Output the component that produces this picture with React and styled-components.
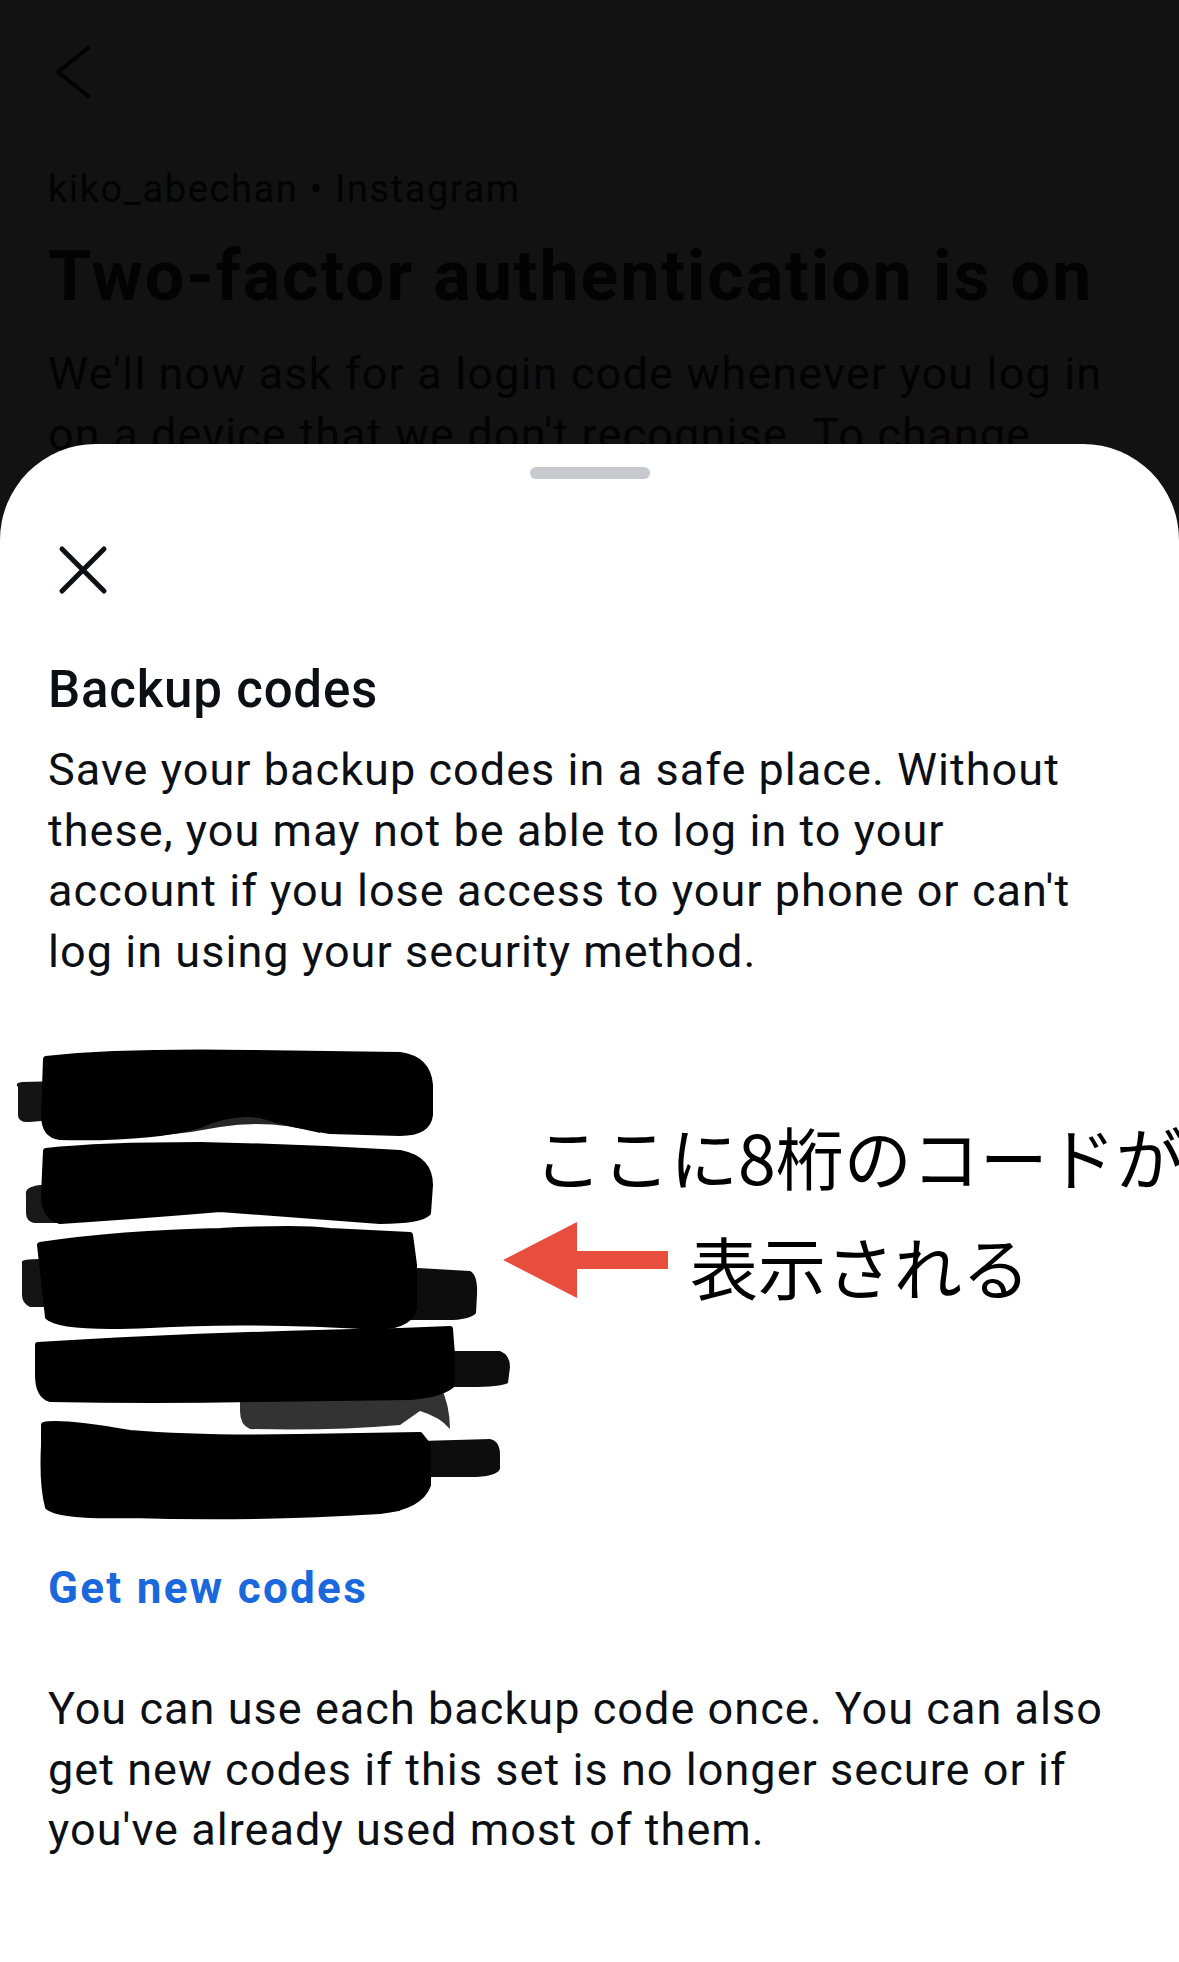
import React from "react";
import styled, { createGlobalStyle } from "styled-components";

const Global = createGlobalStyle`
  html, body { margin: 0; padding: 0; background: #121212; }
  body { font-family: Roboto, "Noto Sans", "Liberation Sans", sans-serif; }
  * { box-sizing: border-box; }
`;

const Screen = styled.div`
  position: relative;
  width: 1179px;
  height: 1962px;
  overflow: hidden;
  background: #121212;
`;

const BehindPage = styled.div`
  display: flex;
  flex-direction: column;
  padding: 44px 48px 0 48px;
  color: #030303;
`;

const BackButton = styled.svg`
  display: block;
  margin-left: 4px;
`;

const Account = styled.div`
  margin-top: 64px;
  font-size: 38px;
  line-height: 46px;
  font-weight: 400;
  letter-spacing: 1.6px;
  white-space: nowrap;
`;

const PageTitle = styled.h1`
  margin: 22px 0 0 0;
  font-size: 70px;
  line-height: 84px;
  font-weight: 700;
  letter-spacing: 1.9px;
  white-space: nowrap;
`;

const PageText = styled.p`
  margin: 26px 0 0 0;
  font-size: 45px;
  line-height: 60.5px;
  letter-spacing: 1.15px;
  white-space: nowrap;
`;

const Sheet = styled.section`
  position: absolute;
  top: 444px;
  left: 0;
  right: 0;
  bottom: 0;
  background: #ffffff;
  border-radius: 96px 96px 0 0;
  display: flex;
  flex-direction: column;
  padding: 0 48px;
  color: #0c1014;
`;

const Handle = styled.div`
  align-self: center;
  width: 120px;
  height: 12px;
  margin-top: 23px;
  border-radius: 6px;
  background: #c7c9cf;
`;

const CloseButton = styled.button`
  margin: 66px 0 0 10px;
  padding: 0;
  width: 50px;
  height: 50px;
  border: 0;
  background: transparent;
  display: block;
`;

const Heading = styled.h2`
  margin: 64px 0 0 0;
  font-size: 51px;
  line-height: 62px;
  font-weight: 500;
  letter-spacing: 0.8px;
  white-space: nowrap;
`;

const Body = styled.p`
  margin: ${(p) => p.$top}px 0 0 0;
  font-size: 45px;
  line-height: 60.5px;
  font-weight: 400;
  letter-spacing: 1.05px;
  white-space: nowrap;
`;

const CodesRow = styled.div`
  margin: 63px -48px 0 -48px;
  height: 480px;
  display: grid;
  grid-template-columns: 503px 1fr;
  align-items: start;
`;

const Redacted = styled.svg`
  display: block;
  overflow: visible;
`;

const Annotation = styled.div`
  margin-top: 56px;
  display: flex;
  flex-direction: column;
  font-family: "Noto Sans CJK JP", "Noto Sans CJK SC", sans-serif;
  font-size: 68px;
  line-height: 110px;
  font-weight: 400;
  color: #000;
  white-space: nowrap;
`;

const NoteLine = styled.div`
  padding-left: ${(p) => p.$indent || 0}px;
  display: flex;
  align-items: center;
  gap: 21px;
`;

const Arrow = styled.svg`
  flex: none;
  display: block;
  margin-bottom: 12px;
`;

const LinkButton = styled.button`
  margin: 36px 0 0 0;
  padding: 0;
  border: 0;
  background: transparent;
  align-self: flex-start;
  font-family: inherit;
  font-size: 44px;
  line-height: 54px;
  font-weight: 700;
  letter-spacing: 2.3px;
  color: #1a68dc;
  white-space: nowrap;
`;

const blobs = [
  { d: "M18 42 Q14 38 22 37 L62 36 L62 74 L30 77 Q18 78 18 70 Z", o: 0.92 },
  { d: "M46 14 Q120 6 250 8 L400 10 Q428 14 430 40 L430 70 Q428 88 400 88 L330 86 Q290 80 260 70 Q230 66 200 80 Q150 94 60 92 Q44 90 44 70 Z", o: 1 },
  { d: "M70 84 Q150 90 220 74 Q270 64 320 80 L320 88 Q270 74 220 82 Q150 96 70 92 Z", o: 0.85 },
  { d: "M26 150 Q24 142 40 140 L62 140 L62 178 L34 178 Q26 176 26 168 Z", o: 0.9 },
  { d: "M46 106 Q100 100 200 100 Q300 102 400 108 Q430 114 430 140 L428 168 Q420 176 380 176 Q300 170 220 164 Q150 170 60 176 Q44 172 44 150 Z", o: 1 },
  { d: "M22 218 Q20 214 40 214 L62 214 L62 262 L30 262 Q22 258 22 250 Z", o: 0.92 },
  { d: "M40 200 Q120 188 220 186 Q300 182 330 186 L410 190 L414 220 L414 262 Q412 280 380 282 Q250 274 150 280 Q60 284 48 272 Z", o: 1 },
  { d: "M330 188 L410 190 L412 226 Q380 210 330 214 Z", o: 0.75 },
  { d: "M400 222 L470 226 Q478 230 477 250 L476 268 Q470 276 440 275 L400 275 Z", o: 0.95 },
  { d: "M240 340 L440 340 Q450 360 450 384 Q440 372 420 366 L400 380 Q330 386 250 384 Q240 380 240 366 Z", o: 0.8 },
  { d: "M38 300 Q200 290 400 286 L450 284 L452 310 L452 340 Q440 350 410 352 L260 354 Q150 356 50 354 Q38 350 38 330 Z", o: 1 },
  { d: "M440 306 L500 306 Q510 310 510 322 L508 338 Q500 342 470 342 L440 342 Z", o: 0.95 },
  { d: "M44 380 Q60 376 130 388 Q200 394 300 392 L420 390 L428 400 L428 440 Q420 462 380 466 Q250 474 130 470 Q60 472 48 462 Q42 440 44 400 Z", o: 1 },
  { d: "M50 440 Q150 452 250 448 Q330 444 400 452 L400 466 Q250 476 120 472 Q60 472 50 462 Z", o: 0.7 },
  { d: "M420 396 L490 394 Q500 396 500 410 L500 424 Q496 432 470 432 L420 432 Z", o: 0.95 },
];

export default function App() {
  return (
    <Screen>
      <Global />
      <BehindPage>
        <BackButton width="40" height="58" viewBox="0 0 40 58">
          <polyline points="36,4 6,28 36,52" fill="none" stroke="#030303" strokeWidth="4" strokeLinecap="round" strokeLinejoin="round" />
        </BackButton>
        <Account>kiko_abechan • Instagram</Account>
        <PageTitle>Two-factor authentication is on</PageTitle>
        <PageText>
          We'll now ask for a login code whenever you log in
          <br />
          on a device that we don't recognise. To change
        </PageText>
      </BehindPage>

      <Sheet>
        <Handle />
        <CloseButton aria-label="Close">
          <svg width="50" height="50" viewBox="0 0 50 50">
            <path d="M4 4 L46 46 M46 4 L4 46" stroke="#0c1014" strokeWidth="5" strokeLinecap="round" />
          </svg>
        </CloseButton>
        <Heading>Backup codes</Heading>
        <Body $top={19}>
          Save your backup codes in a safe place. Without
          <br />
          these, you may not be able to log in to your
          <br />
          account if you lose access to your phone or can't
          <br />
          log in using your security method.
        </Body>

        <CodesRow>
          <Redacted width="520" height="480" viewBox="0 0 520 480">
            {blobs.map((b, i) => (
              <path
                key={i}
                d={b.d}
                fill="#000"
                fillOpacity={b.o}
                stroke={b.o === 1 ? "#000" : "none"}
                strokeWidth="6"
                strokeLinejoin="round"
              />
            ))}
          </Redacted>
          <Annotation>
            <NoteLine $indent={31}>ここに8桁のコードが</NoteLine>
            <NoteLine>
              <Arrow width="166" height="78" viewBox="0 0 166 78">
                <polygon points="0,39 74,1 74,30 165,30 165,48 74,48 74,77" fill="#e84e3e" />
              </Arrow>
              <span>表示される</span>
            </NoteLine>
          </Annotation>
        </CodesRow>

        <LinkButton>Get new codes</LinkButton>
        <Body $top={64}>
          You can use each backup code once. You can also
          <br />
          get new codes if this set is no longer secure or if
          <br />
          you've already used most of them.
        </Body>
      </Sheet>
    </Screen>
  );
}
